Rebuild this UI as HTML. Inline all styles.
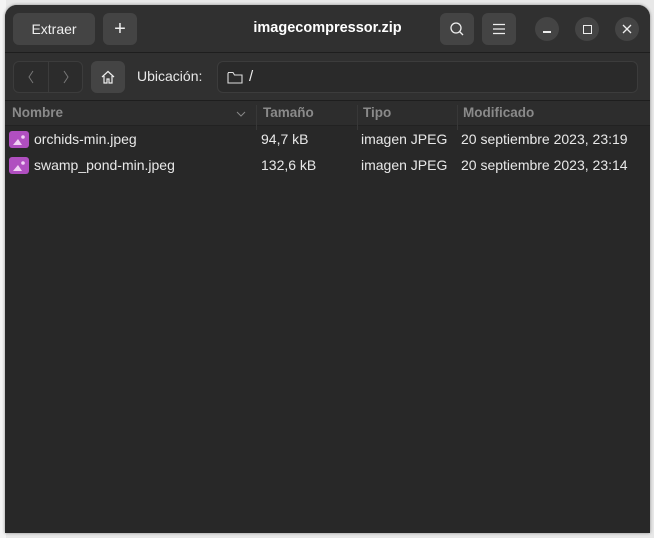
<!DOCTYPE html>
<html><head><meta charset="utf-8"><style>
*{box-sizing:border-box;margin:0;padding:0}
body{width:654px;height:538px;background:#e8e8e8;font-family:"Liberation Sans",sans-serif;overflow:hidden;position:relative}
.leftbg{position:absolute;left:0;top:0;width:6px;height:538px;background:#f4f4f4}
.win{position:absolute;left:5px;top:5px;width:645px;height:528px;background:#282828;border-radius:12px 12px 0 0;overflow:hidden;box-shadow:0 0 3px rgba(0,0,0,.4)}
.hdr{position:absolute;left:0;top:0;width:100%;height:48px;background:#303030;border-bottom:1px solid #1e1e1e}
.btn{position:absolute;background:#444;border-radius:6px;color:#eee;font-size:14px;display:flex;align-items:center;justify-content:center}
.title{position:absolute;left:0;width:100%;top:15px;text-align:center;color:#fff;font-weight:bold;font-size:14.5px}
.circ{position:absolute;top:12px;width:24px;height:24px;border-radius:50%;background:#444;display:flex;align-items:center;justify-content:center}
.tb{position:absolute;left:0;top:48px;width:100%;height:48px;background:#303030;border-bottom:1px solid #1e1e1e}
.cols{position:absolute;left:0;top:96px;width:100%;height:25px;background:#2d2d2d;border-bottom:1px solid #222;color:#8a8a8a;font-weight:bold;font-size:13.5px}
.cols div{position:absolute;top:4px}
.sep{position:absolute;top:0;width:1px;height:25px;background:#383838}
.row{position:absolute;left:0;width:100%;height:25px;color:#e8e8e8;font-size:14px}
.row span{position:absolute;top:4px}
.ic{position:absolute;left:4px;top:4px;width:20px;height:17px;border-radius:3px;background:#b04fc0}
</style></head><body>
<div class="leftbg"></div>
<div class="win">
 <div class="hdr">
  <div class="btn" style="left:8px;top:8px;width:82px;height:32px">Extraer</div>
  <div class="btn" style="left:98px;top:8px;width:34px;height:32px;font-size:20px;font-weight:300">+</div>
  <div class="title">imagecompressor.zip</div>
  <div class="btn" style="left:435px;top:8px;width:34px;height:32px"><svg width="16" height="16" viewBox="0 0 16 16"><circle cx="7" cy="7" r="5" fill="none" stroke="#eee" stroke-width="1.3"/><path d="M10.5 10.5L14 14" stroke="#eee" stroke-width="1.3"/></svg></div>
  <div class="btn" style="left:477px;top:8px;width:34px;height:32px"><svg width="14" height="12" viewBox="0 0 14 12"><path d="M1 1.5h12M1 6h12M1 10.5h12" stroke="#eee" stroke-width="1.2"/></svg></div>
  <div class="circ" style="left:530px"><div style="width:8px;height:1.5px;background:#eee;margin-top:6px"></div></div>
  <div class="circ" style="left:570px"><div style="width:9px;height:9px;border:1.3px solid #eee"></div></div>
  <div class="circ" style="left:610px"><svg width="10" height="10"><path d="M1 1L9 9M9 1L1 9" stroke="#eee" stroke-width="1.3"/></svg></div>
 </div>
 <div class="tb">
  <div style="position:absolute;left:8px;top:8px;width:70px;height:32px;border:1px solid #3c3c3c;border-radius:6px;background:#2c2c2c"><div style="position:absolute;left:34px;top:0;width:1px;height:30px;background:#3c3c3c"></div>
   <svg style="position:absolute;left:13px;top:8px" width="8" height="14"><path d="M6 1L2 7L6 13" stroke="#777" fill="none" stroke-width="1"/></svg>
   <svg style="position:absolute;left:48px;top:8px" width="8" height="14"><path d="M2 1L6 7L2 13" stroke="#777" fill="none" stroke-width="1"/></svg></div>
  <div class="btn" style="left:86px;top:8px;width:34px;height:32px"><svg width="16" height="16" viewBox="0 0 16 16"><path d="M2 8L8 2.5L14 8M4 7v7h3v-4h2v4h3V7" stroke="#eee" fill="none" stroke-width="1.2"/></svg></div>
  <div style="position:absolute;left:132px;top:15px;color:#e8e8e8;font-size:14px">Ubicación:</div>
  <div style="position:absolute;left:212px;top:8px;width:421px;height:32px;border:1px solid #3c3c3c;border-radius:6px;background:#2a2a2a;color:#eee;font-size:15px">
   <svg style="position:absolute;left:9px;top:9px" width="16" height="13"><path d="M1 2.5V12h14V4H7.5L6 1.5H1.5Z" stroke="#ddd" fill="none" stroke-width="1.1"/></svg>
   <span style="position:absolute;left:31px;top:6px">/</span></div>
 </div>
 <div class="cols">
  <div style="left:7px">Nombre</div>
  <svg style="position:absolute;left:231px;top:10px" width="10" height="6"><path d="M1 1L5 5L9 1" stroke="#888" fill="none"/></svg>
  <div class="sep" style="left:251px"></div>
  <div style="left:258px">Tamaño</div>
  <div class="sep" style="left:352px"></div>
  <div style="left:358px">Tipo</div>
  <div class="sep" style="left:452px"></div>
  <div style="left:458px">Modificado</div>
 </div>
 <div class="row" style="top:122px"><div class="ic"><svg width="20" height="17"><path d="M4 14L9 8L13 14Z" fill="#f0d0f4"/><circle cx="14" cy="6" r="1.8" fill="#f0d0f4"/></svg></div><span style="left:29px">orchids-min.jpeg</span><span style="left:256px">94,7 kB</span><span style="left:356px">imagen JPEG</span><span style="left:456px">20 septiembre 2023, 23:19</span></div>
 <div class="row" style="top:148px"><div class="ic"><svg width="20" height="17"><path d="M4 14L9 8L13 14Z" fill="#f0d0f4"/><circle cx="14" cy="6" r="1.8" fill="#f0d0f4"/></svg></div><span style="left:29px">swamp_pond-min.jpeg</span><span style="left:256px">132,6 kB</span><span style="left:356px">imagen JPEG</span><span style="left:456px">20 septiembre 2023, 23:14</span></div>
</div>
</body></html>
